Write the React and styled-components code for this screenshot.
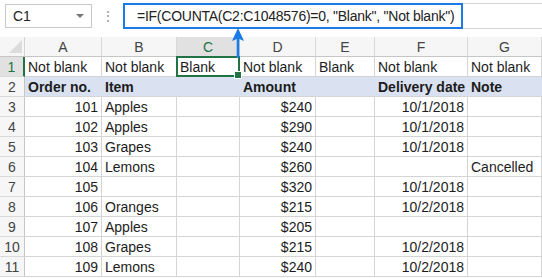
import React from "react";
import styled, { createGlobalStyle } from "styled-components";

const Global = createGlobalStyle`
  html, body { margin: 0; padding: 0; background: #fff; }
  body { font-family: "Liberation Sans", Arial, sans-serif; }
  * { box-sizing: border-box; }
`;

const Page = styled.div`
  position: relative;
  width: 542px;
  height: 278px;
  overflow: hidden;
  background: #fff;
`;

const TopBar = styled.div`
  display: flex;
  align-items: center;
  height: 37px;
  padding: 2px 0 8px 5px;
`;

const NameBox = styled.div`
  display: flex;
  align-items: center;
  justify-content: space-between;
  width: 87px;
  height: 24px;
  border: 1px solid #c8c8c8;
  padding: 0 7px 0 7px;
  font-size: 14px;
  color: #222;
`;

const Caret = styled.span`
  width: 0;
  height: 0;
  border-left: 4px solid transparent;
  border-right: 4px solid transparent;
  border-top: 4px solid #777;
`;

const Dots = styled.div`
  width: 31px;
  text-align: center;
  color: #9a9a9a;
  font-size: 14px;
  line-height: 1;
`;

const FormulaBar = styled.div`
  flex: 1;
  display: flex;
  height: 26px;
  border-top: 1px solid #d4d4d4;
  border-bottom: 1px solid #d4d4d4;
`;

const FormulaBox = styled.div`
  width: 340px;
  height: 26px;
  margin-top: -1px;
  border: 2px solid #1a7be6;
  padding: 0 0 0 12px;
  font-size: 14px;
  letter-spacing: -0.25px;
  line-height: 22px;
  color: #222;
  white-space: nowrap;
`;

const Grid = styled.div`
  display: grid;
  grid-template-columns: 25px 77px 75px 63px 76px 59px 93px 1fr;
  grid-auto-rows: 20px;
`;

const Corner = styled.div`
  position: relative;
  background: #f6f6f6;
  border-right: 1px solid #d4d4d4;
  border-bottom: 1px solid #c6c6c6;
  &::after {
    content: "";
    position: absolute;
    right: 2px;
    bottom: 3px;
    width: 0;
    height: 0;
    border-left: 13px solid transparent;
    border-bottom: 13px solid #dcdcdc;
  }
`;

const ColHead = styled.div`
  background: ${(p) => (p.$active ? "#e1e1e1" : "#f6f6f6")};
  color: ${(p) => (p.$active ? "#217346" : "#444")};
  border-right: 1px solid #d9d9d9;
  border-bottom: 1px solid #c6c6c6;
  text-align: center;
  font-size: 14px;
  line-height: 20px;
`;

const RowHead = styled.div`
  background: ${(p) => (p.$active ? "#e1e1e1" : "#f6f6f6")};
  color: ${(p) => (p.$active ? "#217346" : "#444")};
  border-right: ${(p) => (p.$active ? "2px solid #217346" : "1px solid #c6c6c6")};
  border-bottom: 1px solid #d9d9d9;
  text-align: center;
  font-size: 14px;
  line-height: 20px;
`;

const Cell = styled.div`
  position: relative;
  background: ${(p) => (p.$band ? "#dae1f0" : "#fff")};
  border-right: 1px solid ${(p) => (p.$band ? "#dae1f0" : "#d4d4d4")};
  border-bottom: 1px solid #d4d4d4;
  padding: 0 3px;
  font-size: 14px;
  line-height: 20px;
  font-weight: ${(p) => (p.$bold ? 700 : 400)};
  color: #1c1c1c;
  text-align: ${(p) => (p.$right ? "right" : "left")};
  white-space: nowrap;
  ${(p) =>
    p.$selected &&
    `
    &::after {
      content: "";
      position: absolute;
      left: -1px;
      top: -1px;
      right: -1px;
      bottom: -1px;
      border: 2px solid #217346;
      z-index: 2;
    }
    &::before {
      content: "";
      position: absolute;
      right: -3px;
      bottom: -3px;
      width: 6px;
      height: 6px;
      background: #217346;
      border: 1px solid #fff;
      z-index: 3;
    }
  `}
`;

const Arrow = styled.svg`
  position: absolute;
  left: 231px;
  top: 27px;
  z-index: 5;
`;

const cols = ["A", "B", "C", "D", "E", "F", "G"];
const rightCols = [0, 3, 5];

const rows = [
  ["Not blank", "Not blank", "Blank", "Not blank", "Blank", "Not blank", "Not blank"],
  ["Order no.", "Item", "", "Amount", "", "Delivery date", "Note"],
  ["101", "Apples", "", "$240", "", "10/1/2018", ""],
  ["102", "Apples", "", "$290", "", "10/1/2018", ""],
  ["103", "Grapes", "", "$240", "", "10/1/2018", ""],
  ["104", "Lemons", "", "$260", "", "", "Cancelled"],
  ["105", "", "", "$320", "", "10/1/2018", ""],
  ["106", "Oranges", "", "$215", "", "10/2/2018", ""],
  ["107", "Apples", "", "$205", "", "", ""],
  ["108", "Grapes", "", "$215", "", "10/2/2018", ""],
  ["109", "Lemons", "", "$240", "", "10/2/2018", ""],
];

export default function App() {
  return (
    <Page>
      <Global />
      <TopBar>
        <NameBox>
          <span>C1</span>
          <Caret />
        </NameBox>
        <Dots>⋮</Dots>
        <FormulaBar>
          <FormulaBox>=IF(COUNTA(C2:C1048576)=0, "Blank", "Not blank")</FormulaBox>
        </FormulaBar>
      </TopBar>
      <Grid>
        <Corner />
        {cols.map((c) => (
          <ColHead key={c} $active={c === "C"}>
            {c}
          </ColHead>
        ))}
        {rows.map((r, i) => (
          <React.Fragment key={i}>
            <RowHead $active={i === 0}>{i + 1}</RowHead>
            {r.map((v, j) => (
              <Cell
                key={j}
                $band={i === 1}
                $bold={i === 1}
                $right={i > 1 && rightCols.includes(j)}
                $selected={i === 0 && j === 2}
              >
                {v}
              </Cell>
            ))}
          </React.Fragment>
        ))}
      </Grid>
      <Arrow width="14" height="32" viewBox="0 0 14 32">
        <path d="M7 1 L13 14 L8.3 12 L8.3 31 L5.7 31 L5.7 12 L1 14 Z" fill="#1a7be6" />
      </Arrow>
    </Page>
  );
}
